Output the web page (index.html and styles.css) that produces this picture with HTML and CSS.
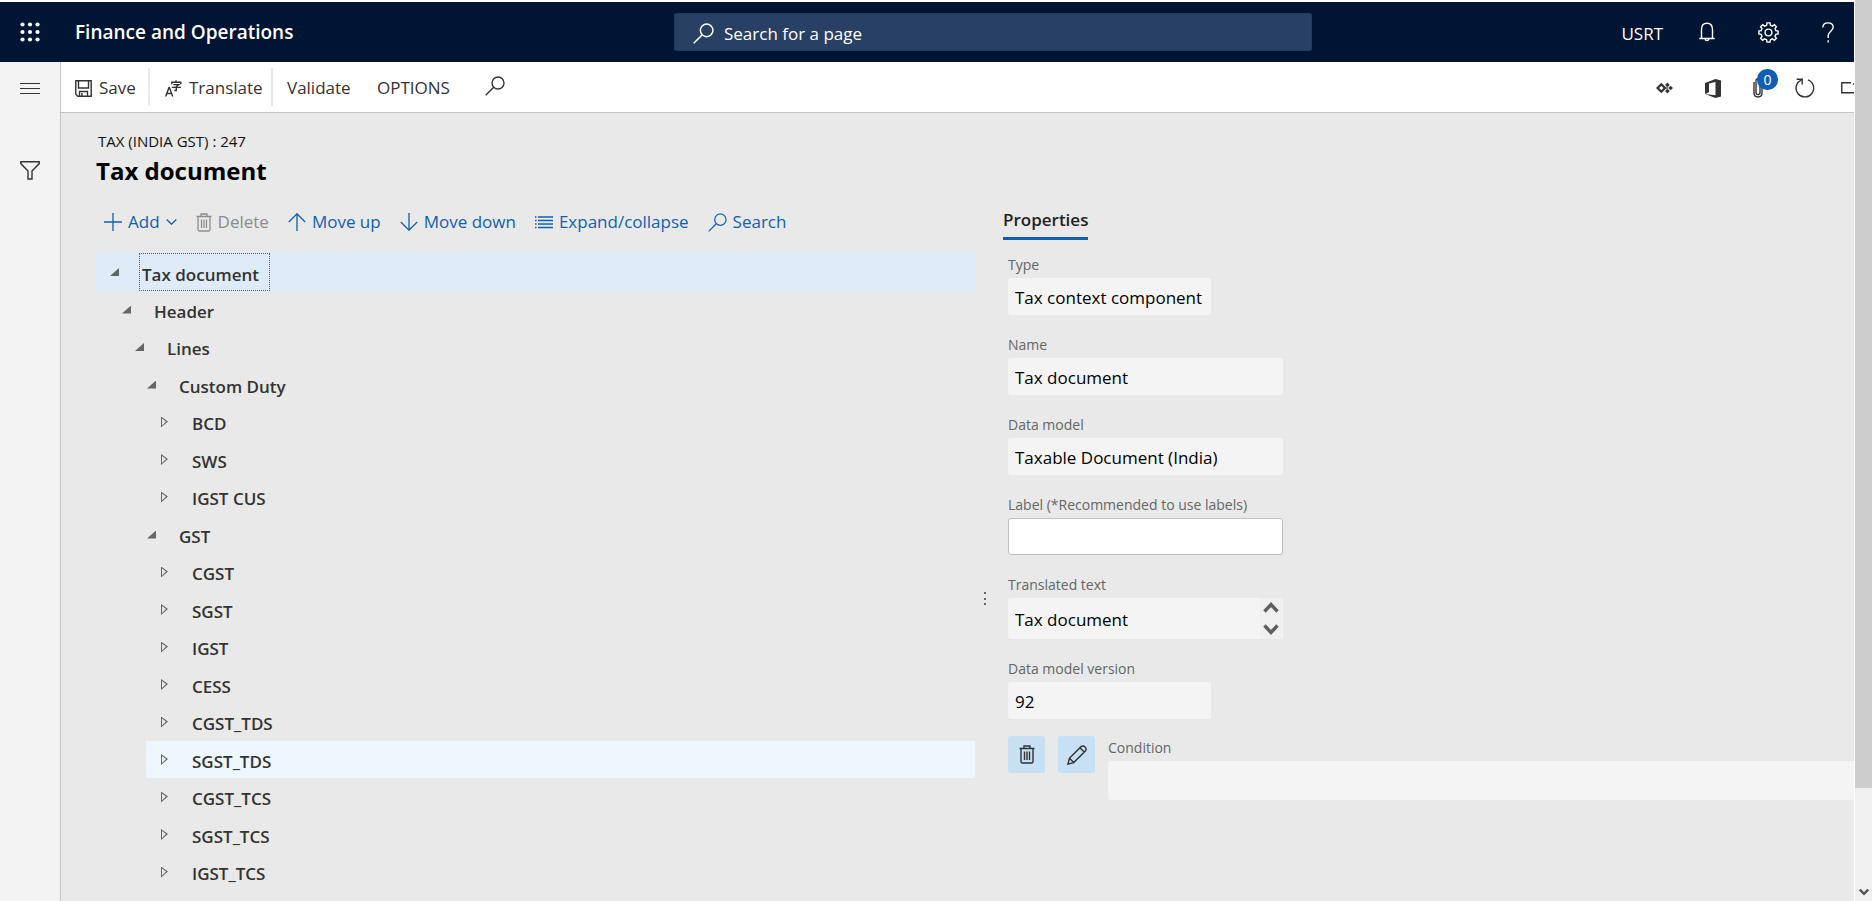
FILE: index.html
```html
<!DOCTYPE html>
<html lang="en">
<head>
<meta charset="utf-8">
<title>Tax document - Finance and Operations</title>
<link rel="stylesheet" href="styles.css">
</head>
<body>
<svg class="defs" aria-hidden="true">
  <symbol id="magnifier" viewBox="0 0 20 20"><circle cx="13" cy="7" r="6"/><path d="M8.7 11.3 L0.7 19.3"/></symbol>
  <symbol id="trash" viewBox="0 0 16 19"><path d="M0.5 3.5H15.5M5 3V1H11V3M2 4V16.5Q2 18 3.5 18H12.5Q14 18 14 16.5V4M5.5 6.5V15M8 6.5V15M10.5 6.5V15"/></symbol>
</svg>
<div class="window">
  <div class="app">
    <header class="topbar">
      <div class="brand">
        <button class="icon-btn rail-cell" aria-label="App launcher">
          <svg width="20" height="20" viewBox="0 0 20 20" fill="#fff"><circle cx="2.5" cy="2.5" r="2.1"/><circle cx="10" cy="2.5" r="2.1"/><circle cx="17.5" cy="2.5" r="2.1"/><circle cx="2.5" cy="10" r="2.1"/><circle cx="10" cy="10" r="2.1"/><circle cx="17.5" cy="10" r="2.1"/><circle cx="2.5" cy="17.5" r="2.1"/><circle cx="10" cy="17.5" r="2.1"/><circle cx="17.5" cy="17.5" r="2.1"/></svg>
        </button>
        <span class="brand-name">Finance and Operations</span>
      </div>
      <div class="page-search">
        <svg class="line" width="21" height="21"><use href="#magnifier"/></svg>
        <input type="search" placeholder="Search for a page" aria-label="Search for a page">
      </div>
      <div class="top-actions">
        <button class="company">USRT</button>
        <button class="icon-btn" aria-label="Notifications">
          <svg class="line" width="16" height="20" viewBox="0 0 16 20"><path d="M2.5 16.5V7.5Q2.5 1.2 8 1.2T13.5 7.5V16.5M0.3 16.5H15.7M6 17.3Q8 20 10 17.3"/></svg>
        </button>
        <button class="icon-btn" aria-label="Settings">
          <svg class="line" width="21" height="21" viewBox="0 0 21 21"><circle cx="10.5" cy="10.5" r="3.4"/><path d="M8.6 3.3 L9 0.9H12L12.4 3.3L14.4 4.1L16.4 2.7L18.4 4.7L17 6.6L17.8 8.6L20.1 9V12L17.8 12.4L17 14.4L18.4 16.3L16.4 18.3L14.4 16.9L12.4 17.7L12 20.1H9L8.6 17.7L6.6 16.9L4.6 18.3L2.6 16.3L4 14.4L3.2 12.4L0.9 12V9L3.2 8.6L4 6.6L2.6 4.7L4.6 2.7L6.6 4.1Z"/></svg>
        </button>
        <button class="icon-btn" aria-label="Help">
          <svg class="line" width="12" height="21" viewBox="0 0 12 21"><path d="M0.8 5.5Q1 0.9 6 0.9T11.2 5.3C11.2 9 6.2 9.5 6.2 13.5V16M6.2 18.3V20.5"/></svg>
        </button>
      </div>
    </header>

    <div class="below">
      <nav class="rail" aria-label="Navigation">
        <button class="icon-btn rail-menu" aria-label="Show navigation">
          <svg class="line crisp" width="20" height="12" viewBox="0 0 20 12"><path d="M0 1.5H20M0 6.5H20M0 11.5H20"/></svg>
        </button>
        <button class="icon-btn rail-filter" aria-label="Filter">
          <svg class="line" width="20" height="19" viewBox="0 0 20 19"><path d="M0.8 0.8H19.2V2.6L12 10V18H8V10L0.8 2.6Z"/></svg>
        </button>
      </nav>

      <div class="main">
        <div class="commands" role="toolbar" aria-label="Page actions">
          <button class="cmd cmd-save">
            <svg class="line" width="17" height="17" viewBox="0 0 17 17"><path d="M0.8 0.8H16.2V16.2H2.8L0.8 14.2ZM3.5 1V8H13.5V1M4.5 16V11.5H12.5V16M7 13V16"/></svg>
            Save</button>
          <button class="cmd cmd-translate">
            <svg class="line" width="17" height="17" viewBox="0 0 17 17"><path d="M0.7 16.5L3.9 7.8H4.5L7.7 16.5M1.8 13.5H6.6M11 0.3V2M6.8 4.2V2.2H15.8V4.2M8.3 4.6H13.8L11.3 6.5V10.5H9.3M6.8 7.4H16"/></svg>
            Translate</button>
          <button class="cmd cmd-validate">Validate</button>
          <button class="cmd cmd-options">OPTIONS</button>
          <button class="cmd cmd-find" aria-label="Search actions"><svg class="line" width="20" height="20"><use href="#magnifier"/></svg></button>
          <div class="cmd-right">
            <button class="icon-btn" aria-label="Power Apps">
              <svg width="17" height="12" viewBox="0 0 17 12"><path d="M5.3 2.3L9 6L5.3 9.7L1.6 6Z" fill="none" stroke="#333" stroke-width="2.3"/><path d="M11.4 0.6L13.7 2.9L11.4 5.2L9.1 2.9ZM11.4 6.8L13.7 9.1L11.4 11.4L9.1 9.1ZM14.6 3.7L16.9 6L14.6 8.3L12.3 6ZM11 4.9L12.1 6L11 7.1L9.9 6Z" fill="#333"/></svg>
            </button>
            <button class="icon-btn" aria-label="Open in Microsoft Office">
              <svg width="16" height="19" viewBox="0 0 16 19"><path d="M0 4L10.5 0L16 1.5V17.5L10.5 19L0 15L10.5 16.2V3L4 4.6V13.3L0 15Z" fill="#333"/></svg>
            </button>
            <button class="icon-btn attach" aria-label="Attachments">
              <svg class="line" width="10" height="20" viewBox="0 0 10 20"><path d="M1 4V14.8Q1 19 5 19T9 14.8V3Q9 0.8 7 0.8H5Q3 0.8 3 3V14.5Q3 16.6 5 16.6T7 14.5V5"/></svg>
              <span class="badge">0</span>
            </button>
            <button class="icon-btn" aria-label="Refresh">
              <svg class="line" width="20" height="20" viewBox="0 0 20 20"><path d="M13 1.9A8.8 8.8 0 1 1 6.2 2.1M1.6 1.2H7.2V6.6"/></svg>
            </button>
            <button class="icon-btn popout" aria-label="Open in new window">
              <svg class="line" width="20" height="12" viewBox="0 0 20 12"><path d="M10 0.8H0.8V10.8H19V5M12 2.5L14 0.8"/></svg>
            </button>
          </div>
        </div>

        <div class="content">
          <p class="context">TAX (INDIA GST) : 247</p>
          <h1>Tax document</h1>
          <div class="columns">
            <section class="tree-pane" aria-label="Tax document structure">
              <div class="actions" role="toolbar" aria-label="Tree actions">
                <button class="act"><svg class="line" width="18" height="18" viewBox="0 0 18 18"><path d="M9 0V18M0 9H18"/></svg>Add<svg class="line caret" width="11" height="6" viewBox="0 0 11 6"><path d="M0.7 0.5L5.5 5.2L10.3 0.5"/></svg></button>
                <button class="act act-delete" disabled><svg class="line" width="16" height="19"><use href="#trash"/></svg>Delete</button>
                <button class="act"><svg class="line" width="18" height="18" viewBox="0 0 18 18"><path d="M9 18V0.8M0.8 9L9 0.8L17.2 9"/></svg>Move up</button>
                <button class="act"><svg class="line" width="18" height="18" viewBox="0 0 18 18"><path d="M9 0V17.2M0.8 9L9 17.2L17.2 9"/></svg>Move down</button>
                <button class="act"><svg class="line" width="18" height="13" viewBox="0 0 18 13"><path d="M0 1H1.5M3 1H18M0 4.5H1.5M3 4.5H18M0 8H1.5M3 8H18M0 11.5H1.5M3 11.5H18"/></svg>Expand/collapse</button>
                <button class="act act-search"><svg class="line" width="19" height="19"><use href="#magnifier"/></svg>Search</button>
              </div>
              <ul class="tree" role="tree">
                <li class="l0 selected open" role="treeitem" aria-level="1" aria-selected="true"><button class="twisty" aria-label="Collapse"></button><span class="node">Tax document</span></li>
                <li class="l1 open" role="treeitem" aria-level="2"><button class="twisty" aria-label="Collapse"></button><span class="node">Header</span></li>
                <li class="l2 open" role="treeitem" aria-level="3"><button class="twisty" aria-label="Collapse"></button><span class="node">Lines</span></li>
                <li class="l3 open" role="treeitem" aria-level="4"><button class="twisty" aria-label="Collapse"></button><span class="node">Custom Duty</span></li>
                <li class="l4" role="treeitem" aria-level="5"><button class="twisty" aria-label="Expand"></button><span class="node">BCD</span></li>
                <li class="l4" role="treeitem" aria-level="5"><button class="twisty" aria-label="Expand"></button><span class="node">SWS</span></li>
                <li class="l4" role="treeitem" aria-level="5"><button class="twisty" aria-label="Expand"></button><span class="node">IGST CUS</span></li>
                <li class="l3 open" role="treeitem" aria-level="4"><button class="twisty" aria-label="Collapse"></button><span class="node">GST</span></li>
                <li class="l4" role="treeitem" aria-level="5"><button class="twisty" aria-label="Expand"></button><span class="node">CGST</span></li>
                <li class="l4" role="treeitem" aria-level="5"><button class="twisty" aria-label="Expand"></button><span class="node">SGST</span></li>
                <li class="l4" role="treeitem" aria-level="5"><button class="twisty" aria-label="Expand"></button><span class="node">IGST</span></li>
                <li class="l4" role="treeitem" aria-level="5"><button class="twisty" aria-label="Expand"></button><span class="node">CESS</span></li>
                <li class="l4" role="treeitem" aria-level="5"><button class="twisty" aria-label="Expand"></button><span class="node">CGST_TDS</span></li>
                <li class="l4 hovered" role="treeitem" aria-level="5"><button class="twisty" aria-label="Expand"></button><span class="node">SGST_TDS</span></li>
                <li class="l4" role="treeitem" aria-level="5"><button class="twisty" aria-label="Expand"></button><span class="node">CGST_TCS</span></li>
                <li class="l4" role="treeitem" aria-level="5"><button class="twisty" aria-label="Expand"></button><span class="node">SGST_TCS</span></li>
                <li class="l4" role="treeitem" aria-level="5"><button class="twisty" aria-label="Expand"></button><span class="node">IGST_TCS</span></li>
              </ul>
            </section>

            <div class="splitter" role="separator" aria-orientation="vertical">
              <svg width="3" height="14" viewBox="0 0 3 14" fill="#666"><path d="M0 0H2V2H0ZM0 6H2V8H0ZM0 11H2V13H0Z"/></svg>
            </div>

            <section class="props">
              <div role="tablist"><button class="tab" role="tab" aria-selected="true">Properties</button></div>
              <form class="fields">
                <div class="field short"><label for="type">Type</label><input id="type" value="Tax context component" readonly></div>
                <div class="field"><label for="name">Name</label><input id="name" value="Tax document" readonly></div>
                <div class="field"><label for="model">Data model</label><input id="model" value="Taxable Document (India)" readonly></div>
                <div class="field"><label for="lbl">Label (*Recommended to use labels)</label><input id="lbl" class="editable"></div>
                <div class="field"><label for="translated">Translated text</label>
                  <div class="multi">
                    <textarea id="translated" rows="1" readonly>Tax document</textarea>
                    <div class="spin">
                      <button type="button" aria-label="Scroll up"><svg width="16" height="13" viewBox="0 0 16 13"><path d="M1.5 10.5L8 3.5L14.5 10.5"/></svg></button>
                      <button type="button" aria-label="Scroll down"><svg width="16" height="13" viewBox="0 0 16 13"><path d="M1.5 2.5L8 9.5L14.5 2.5"/></svg></button>
                    </div>
                  </div>
                </div>
                <div class="field short"><label for="version">Data model version</label><input id="version" value="92" readonly></div>
                <div class="condition-row">
                  <button type="button" class="tile" aria-label="Delete condition"><svg class="line" width="16" height="19"><use href="#trash"/></svg></button>
                  <button type="button" class="tile" aria-label="Edit condition"><svg class="line" width="20" height="20" viewBox="0 0 20 20"><path d="M0.9 19.1L2.4 13.3L14.3 1.4Q16.2 0.2 18 2T18.6 5.7L6.7 17.6ZM2.4 13.3L6.7 17.6M12.9 2.8L17.2 7.1"/></svg></button>
                  <div class="field condition"><label for="cond">Condition</label><input id="cond" readonly></div>
                </div>
              </form>
            </section>
          </div>
        </div>
      </div>
    </div>
  </div>
  <div class="scrollbar" aria-hidden="true">
    <div class="thumb"></div>
    <svg width="10" height="8" viewBox="0 0 10 8"><path d="M0.8 1.5L5 5.8L9.2 1.5" fill="none" stroke="#555" stroke-width="2.4"/></svg>
  </div>
</div>
</body>
</html>
```
FILE: styles.css
```css
* { box-sizing: border-box; }
body {
  margin: 0;
  background: #fff;
  color: #333;
  font: 17px/24px "Open Sans", "Noto Sans", sans-serif;
}
button, input, textarea { font: inherit; color: inherit; margin: 0; }
button { background: none; border: 0; padding: 0; }
svg { display: block; flex: none; }
.defs { position: absolute; width: 0; height: 0; }
.line { fill: none; stroke: currentColor; stroke-width: 1.4; }
.crisp { shape-rendering: crispEdges; stroke-width: 1; }

.window { display: flex; height: 100vh; overflow: hidden; }
.app { flex: 1; min-width: 0; padding-top: 2px; display: flex; flex-direction: column; }
.icon-btn { display: flex; align-items: center; justify-content: center; }

/* top bar */
.topbar {
  display: grid;
  grid-template-columns: minmax(0, 674fr) minmax(0, 638fr) minmax(0, 542fr);
  height: 60px;
  flex: none;
  background: #001433;
  color: #fff;
}
.brand { display: flex; align-items: center; }
.rail-cell { width: 60px; height: 60px; }
.brand-name { margin-left: 15px; font-size: 19px; font-weight: 600; }
.page-search {
  display: flex;
  align-items: center;
  gap: 10px;
  height: 38px;
  margin-top: 11px;
  padding-left: 18px;
  background: #284064;
  border: 1px solid #223960;
  border-radius: 2px;
}
.page-search svg { margin-top: 3px; }
.page-search input { flex: 1; min-width: 0; background: none; border: 0; padding: 4px 0 0; outline: 0; }
.page-search input::placeholder { color: #fff; opacity: 1; }
.top-actions { display: flex; align-items: center; justify-content: flex-end; padding-right: 20px; }
.company { margin-right: 36px; padding-top: 4px; }
.top-actions .icon-btn { margin-right: 43px; }
.top-actions .icon-btn:last-child { margin-right: 0; }

.below { flex: 1; min-height: 0; display: flex; }

/* left rail */
.rail { flex: none; width: 61px; background: #f3f3f3; border-right: 1px solid #c4c4c4; }
.rail .icon-btn { width: 60px; }
.rail-menu { height: 51px; }
.rail-filter { height: 32px; margin-top: 41px; }

.main { flex: 1; min-width: 0; display: flex; flex-direction: column; }

/* command bar */
.commands {
  display: flex;
  flex: none;
  align-items: center;
  height: 51px;
  padding-left: 14px;
  background: #fff;
  border-bottom: 1px solid #c4c4c4;
  overflow: hidden;
}
.cmd { display: flex; align-items: center; gap: 7px; height: 38px; padding-top: 2px; }
.cmd-save { width: 75px; border-right: 2px solid #e9e9e9; }
.cmd-translate { width: 123px; padding-left: 15px; border-right: 2px solid #e9e9e9; }
.cmd-validate { width: 90px; padding-left: 14px; }
.cmd-options { width: 108px; padding-left: 14px; }
.cmd-find { padding: 0 0 2px 14px; }
.cmd-right { display: flex; align-items: center; gap: 32px; margin-left: auto; padding-top: 2px; }
.cmd-right .popout { width: 13px; justify-content: flex-start; overflow: hidden; margin-left: -6px; }
.attach { position: relative; width: 10px; }
.badge {
  position: absolute;
  left: 4px;
  top: -9px;
  width: 21px;
  height: 21px;
  border-radius: 10px;
  background: #105fb4;
  color: #fff;
  font-size: 14px;
  line-height: 21px;
  text-align: center;
}

/* content */
.content { flex: 1; min-height: 0; padding: 18px 0 0 35px; background: #e9e9e9; overflow: hidden; }
.context { margin: 0; padding-left: 2px; font-size: 15px; line-height: 20px; color: #111; }
h1 { margin: 4px 0 0; font-size: 24px; line-height: 32px; color: #000; }
.columns { display: flex; margin-top: 16px; }
.tree-pane { flex: 879 1 0; min-width: 0; }
.actions { display: flex; align-items: center; height: 38px; gap: 19px; padding-left: 8px; margin-bottom: 12px; }
.act { display: flex; align-items: center; gap: 6px; color: #1160b0; white-space: nowrap; }
.act:disabled { color: #8c8c8c; }
.act .line { stroke-width: 1.3; }

/* tree */
.tree { list-style: none; margin: 0; padding: 0; }
.tree li { display: flex; align-items: center; height: 38px; }
.tree li:nth-child(even) { height: 37px; }
.l1 { margin-left: 12px; }
.l2 { margin-left: 25px; }
.l3 { margin-left: 37px; }
.l4 { margin-left: 50px; }
.selected { background: #deebf8; }
.hovered { background: #eef6fe; }
.twisty { width: 43px; height: 24px; padding-left: 15px; flex: none; }
.twisty::before {
  content: "";
  display: block;
  width: 7px;
  height: 11px;
  background: #666;
  clip-path: polygon(evenodd, 0 0, 7px 5px, 0 11px, 0 0, 1px 2px, 1px 9px, 5px 5px, 1px 2px);
}
.open .twisty { padding-left: 14px; }
.open .twisty::before { width: 9px; height: 8px; clip-path: polygon(100% 0, 100% 100%, 0 100%); }
.node { padding: 4px 3px 0; font-weight: 600; }
.selected .node { height: 38px; padding: 9px 10px 0 2px; border: 1px dotted #1f6fb8; }

.splitter { flex: none; width: 28px; display: flex; justify-content: center; padding: 389px 8px 0 0; }

/* properties */
.props { flex: 851 1 0; min-width: 0; }
.tab { height: 37px; border-bottom: 3px solid #1160b0; color: #222; font-weight: 600; }
.fields { padding: 15px 0 0 5px; }
.field { display: flex; flex-direction: column; gap: 3px; width: 275px; margin-bottom: 20px; }
.short input { width: 203px; }
.field label { font-size: 14px; line-height: 20px; color: #666; }
.field input, .multi { height: 37px; padding: 2px 7px 0; border: 0; border-radius: 3px; background: #f4f4f4; color: #000; outline: 0; }
.field .editable { background: #fff; border: 1px solid #c0c0c0; }
.field .multi { display: flex; height: 41px; padding: 0 1px 0 7px; }
.multi textarea { flex: 1; min-width: 0; padding: 10px 0 0; border: 0; background: none; resize: none; overflow: hidden; outline: 0; }
.spin { display: flex; flex-direction: column; justify-content: space-between; width: 22px; padding: 3px; background: #f0f0f0; }
.spin path { fill: none; stroke: #606060; stroke-width: 3.4; }
.condition-row { display: flex; margin-top: -3px; }
.tile { display: flex; align-items: center; justify-content: center; flex: none; width: 37px; height: 37px; margin-right: 13px; border-radius: 3px; background: #c7e0f4; }
.condition { flex: 1; width: auto; min-width: 0; padding-top: 2px; }
.condition input { height: 39px; border-radius: 3px 0 0 3px; }

/* window scrollbar */
.scrollbar { flex: none; width: 18px; display: flex; flex-direction: column; justify-content: space-between; align-items: center; padding-bottom: 5px; background: #f0f0f0; border-left: 1px solid #fff; }
.thumb { width: 100%; height: 88%; background: #cdcdcd; }
```
